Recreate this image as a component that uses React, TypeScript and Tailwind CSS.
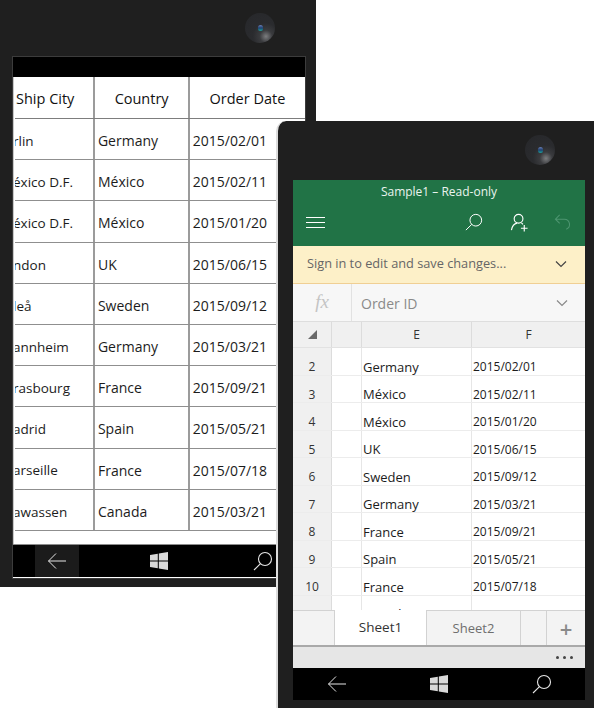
const orders = [
  { city: "rlin", country: "Germany", date: "2015/02/01" },
  { city: "éxico D.F.", country: "México", date: "2015/02/11" },
  { city: "éxico D.F.", country: "México", date: "2015/01/20" },
  { city: "ndon", country: "UK", date: "2015/06/15" },
  { city: "leå", country: "Sweden", date: "2015/09/12" },
  { city: "annheim", country: "Germany", date: "2015/03/21" },
  { city: "rasbourg", country: "France", date: "2015/09/21" },
  { city: "adrid", country: "Spain", date: "2015/05/21" },
  { city: "arseille", country: "France", date: "2015/07/18" },
  { city: "awassen", country: "Canada", date: "2015/03/21" },
];

const sheetRows = [
  ["2", "Germany", "2015/02/01"],
  ["3", "México", "2015/02/11"],
  ["4", "México", "2015/01/20"],
  ["5", "UK", "2015/06/15"],
  ["6", "Sweden", "2015/09/12"],
  ["7", "Germany", "2015/03/21"],
  ["8", "France", "2015/09/21"],
  ["9", "Spain", "2015/05/21"],
  ["10", "France", "2015/07/18"],
  ["11", "Canada", "2015/03/21"],
];

function Camera() {
  return (
    <div className="flex h-[30px] w-[30px] items-center justify-center rounded-full bg-[radial-gradient(circle_at_70%_78%,#7c7d7f_0%,#3a3b3e_20%,#2a2b2e_42%,#26272a_100%)]">
      <div className="h-[6px] w-[5px] rounded-full bg-[linear-gradient(#6a7fb5,#1f3f70_50%,#1aa59c)]" />
    </div>
  );
}

function SearchIcon({ className }: { className: string }) {
  return (
    <svg viewBox="0 0 20 20" fill="none" stroke="currentColor" strokeWidth="1.1" className={className}>
      <circle cx="12" cy="8" r="6.5" />
      <path d="M7.5 12.6 1 19" />
    </svg>
  );
}

function BackIcon() {
  return (
    <svg viewBox="0 0 20 18" fill="none" stroke="#e6e6e6" strokeWidth="1" className="h-[18px] w-5">
      <path d="M19 9H1.5M9 1.5 1.5 9 9 16.5" />
    </svg>
  );
}

function WindowsIcon() {
  return (
    <svg viewBox="0 0 18 18" fill="#d9d9d9" className="h-[18px] w-[18px]">
      <path d="M0 3 7.8 1.7V8.5H0ZM8.8 1.5 18 0V8.5H8.8ZM0 9.5H7.8V16.3L0 15ZM8.8 9.5H18V18L8.8 16.5Z" />
    </svg>
  );
}

function OrdersPhone() {
  return (
    <div className="relative h-[587px] w-[316px] bg-[#1f1f1f] pl-3 pt-14">
      <div className="absolute left-[245px] top-[13px]">
        <Camera />
      </div>
      <div className="h-[523px] w-[294px] overflow-hidden border border-[#3c3c3c] bg-white">
        <div className="h-5 bg-black" />
        <div className="flex h-[467px] flex-col overflow-hidden border-l border-[#c8c8c8] pl-px font-['Open_Sans',sans-serif] text-[14px] text-[#1c1c1c]">
          <div className="flex h-[42px] shrink-0 border-b border-[#7d7d7d] text-[14.5px] font-medium text-[#111111]">
            <div className="flex w-[81px] items-center border-r-2 border-[#9b9b9b] pl-[1px] pt-[2px]">Ship City</div>
            <div className="flex w-[95px] items-center justify-center border-r-2 border-[#9b9b9b] pt-[2px]">Country</div>
            <div className="flex w-[116px] items-center justify-center pt-[2px]">Order Date</div>
          </div>
          {orders.map((o) => (
            <div key={o.date + o.city} className="flex h-[41.2px] shrink-0 border-b border-[#8f8f8f]">
              <div className="flex w-[81px] items-center overflow-hidden whitespace-nowrap border-r-2 border-[#9b9b9b] pt-[4px] text-[13.5px]">
                <span className="-ml-[2px]">{o.city}</span>
              </div>
              <div className="flex w-[95px] items-center border-r-2 border-[#9b9b9b] pl-[2.5px] pt-[3px]">{o.country}</div>
              <div className="flex w-[116px] items-center pl-[3px] pt-[3px]">{o.date}</div>
            </div>
          ))}
        </div>
        <div className="flex h-[33px] items-center border-t border-[#8c8c8c] bg-black">
          <div className="ml-[22px] flex h-full w-11 items-center justify-center bg-[#1b1b1b]">
            <BackIcon />
          </div>
          <div className="ml-[71px]">
            <WindowsIcon />
          </div>
          <div className="ml-[85px] text-[#e6e6e6]">
            <SearchIcon className="h-5 w-5" />
          </div>
        </div>
      </div>
    </div>
  );
}

function ExcelPhone() {
  return (
    <div className="absolute left-[276px] top-[121px] h-[587px] w-[318px] rounded-tl-[10px] border-l-2 border-[#dcdcdc] bg-[#1f1f1f] pl-[15px] pt-[59px]">
      <div className="absolute left-[247px] top-[14px]">
        <Camera />
      </div>
      <div className="h-[520px] w-[292px] overflow-hidden bg-white font-['Open_Sans',sans-serif]">
        <div className="h-[66px] bg-[#217346] text-white">
          <div className="pt-[3px] text-center text-[12px] leading-[17px] text-[#eaf3ee]">Sample1 – Read-only</div>
          <div className="flex h-[44px] items-center pl-[13px]">
            <div className="flex w-[19px] flex-col gap-[4px]">
              <div className="h-px bg-white" />
              <div className="h-px bg-white" />
              <div className="h-px bg-white" />
            </div>
            <SearchIcon className="ml-[140px] h-[18px] w-[18px]" />
            <svg viewBox="0 0 20 20" fill="none" stroke="currentColor" strokeWidth="1.2" className="ml-[27px] h-[19px] w-[19px]">
              <circle cx="9" cy="6" r="4.6" />
              <path d="M1.5 18c.7-4 3.2-7 6-7.4M12 10.5c.7.4 1.2.9 1.6 1.5M15 12.5v7M11.5 16h7" />
            </svg>
            <svg viewBox="0 0 18 18" fill="none" stroke="#4d9570" strokeWidth="1.1" className="ml-[25px] h-[17px] w-[17px]">
              <path d="M6 1 1.5 5.5 6 10M1.5 5.5H11a5.5 5.5 0 0 1 2 10.6" />
            </svg>
          </div>
        </div>
        <div className="flex h-[38px] items-center border-b border-[#f0cf94] bg-[#fdf0c8] pb-[2px] pl-[14px] pr-[18px] text-[12.75px] text-[#666666]">
          <span className="flex-1">Sign in to edit and save changes...</span>
          <svg viewBox="0 0 12 8" fill="none" stroke="#444444" strokeWidth="1.2" className="h-2 w-3">
            <path d="M1 1.5 6 6.5 11 1.5" />
          </svg>
        </div>
        <div className="flex h-[38px] items-center border-b border-[#dedede] bg-[#f7f7f7] text-[14px] text-[#8a8a8a]">
          <div className="flex h-full w-[59px] items-center justify-center border-r border-[#e2e2e2] font-['Liberation_Serif',serif] text-[19px] italic text-[#c4c4c4]">fx</div>
          <span className="flex-1 pl-[9px] pt-[1px]">Order ID</span>
          <svg viewBox="0 0 12 8" fill="none" stroke="#8a8a8a" strokeWidth="1.2" className="mr-[17px] h-2 w-3">
            <path d="M1 1.5 6 6.5 11 1.5" />
          </svg>
        </div>
        <div className="flex h-[26px] border-b border-[#e2e2e2] bg-[#f0f0f0] text-[12px] text-[#333333]">
          <div className="flex w-[39px] items-center justify-center border-r border-[#dcdcdc]">
            <div className="h-0 w-0 border-b-[9px] border-l-[9px] border-b-[#6a6a6a] border-l-transparent" />
          </div>
          <div className="w-[30px] border-r border-[#dcdcdc]" />
          <div className="flex w-[110px] items-center justify-center border-r border-[#dcdcdc]">E</div>
          <div className="flex flex-1 items-center justify-center">F</div>
        </div>
        <div className="h-[262px] overflow-hidden text-[12px] text-[#1c1c1c]">
          {sheetRows.map(([n, country, date]) => (
            <div key={n} className="flex h-[27.5px] border-b border-[#ececec]">
              <div className="flex w-[39px] items-center justify-center border-r border-[#dcdcdc] bg-[#f0f0f0] pt-[12px] text-[#333333]">{n}</div>
              <div className="w-[30px] border-r border-[#e6e6e6]" />
              <div className="flex w-[110px] items-center border-r border-[#e6e6e6] pl-px pt-[12px] text-[13px]">{country}</div>
              <div className="flex flex-1 items-center pl-px pt-[12px]">{date}</div>
            </div>
          ))}
        </div>
        <div className="flex h-[37px] border-b-2 border-[#a9a9a9] bg-[#f3f3f3]">
          <div className="w-[42px] border-r border-t border-[#d2d2d2]" />
          <div className="flex w-[92px] items-center justify-center border-r border-[#d2d2d2] bg-white text-[13.5px] font-medium text-[#333333]">Sheet1</div>
          <div className="flex w-[94px] items-center justify-center border-r border-t border-[#d2d2d2] pt-[2px] text-[13px] text-[#6e6e6e]">Sheet2</div>
          <div className="w-[26px] border-r border-t border-[#d2d2d2]" />
          <div className="flex flex-1 items-center justify-center border-t border-[#d2d2d2] text-[22px] font-semibold leading-none text-[#8a8a8a]">+</div>
        </div>
        <div className="flex h-[21px] items-center justify-end gap-1 bg-[#e6e6e6] pr-3">
          <div className="h-[3px] w-[3px] rounded-full bg-[#444444]" />
          <div className="h-[3px] w-[3px] rounded-full bg-[#444444]" />
          <div className="h-[3px] w-[3px] rounded-full bg-[#444444]" />
        </div>
        <div className="flex h-[32px] items-center bg-black pl-[34px]">
          <BackIcon />
          <div className="ml-[83px]">
            <WindowsIcon />
          </div>
          <div className="ml-[84px] text-[#e6e6e6]">
            <SearchIcon className="h-5 w-5" />
          </div>
        </div>
      </div>
    </div>
  );
}

export default function App() {
  return (
    <div className="relative h-[708px] w-[594px] overflow-hidden bg-white">
      <OrdersPhone />
      <ExcelPhone />
    </div>
  );
}
